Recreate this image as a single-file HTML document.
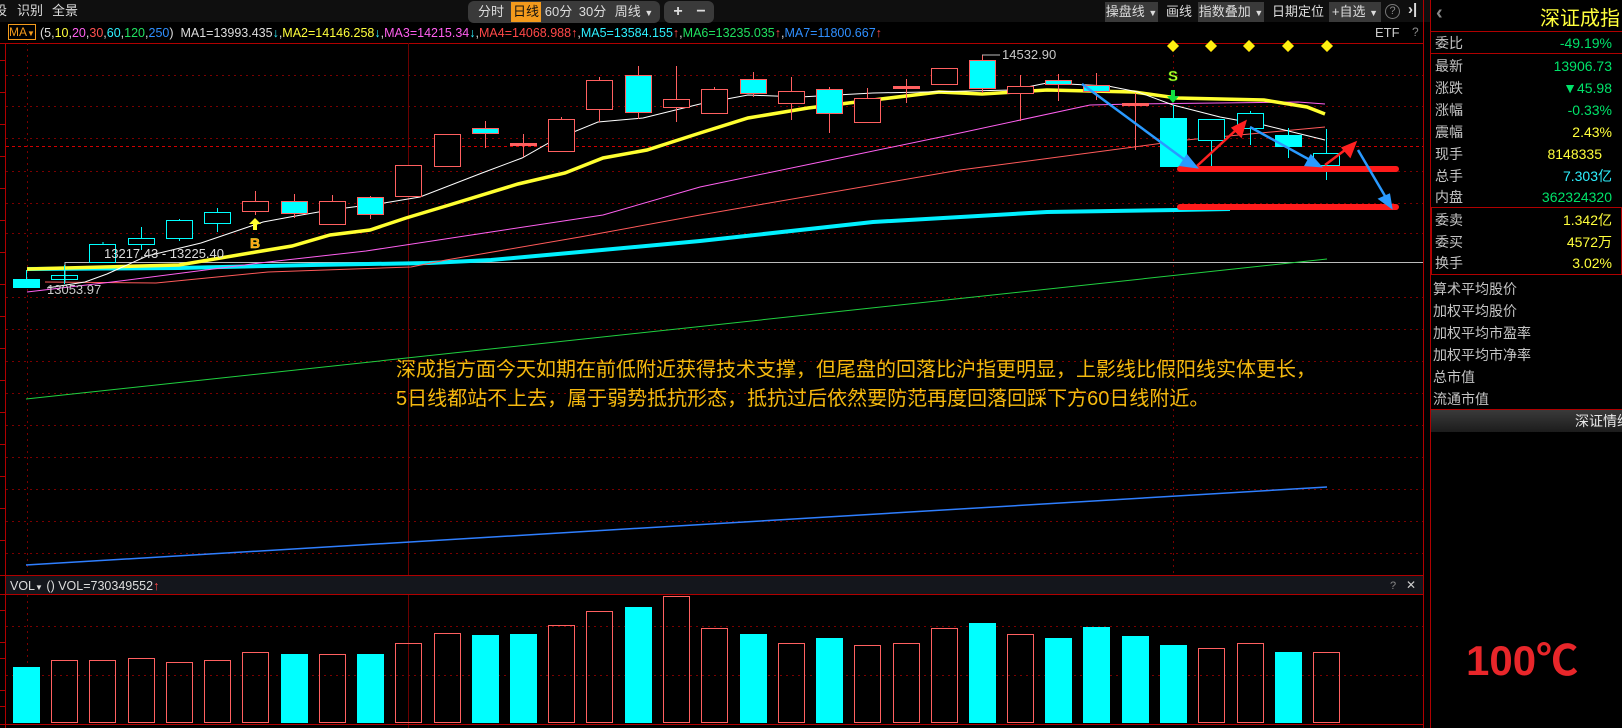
<!DOCTYPE html>
<html><head><meta charset="utf-8">
<style>
*{margin:0;padding:0;box-sizing:border-box}
body{width:1622px;height:728px;background:#000;overflow:hidden;position:relative;font-family:"Liberation Sans","Noto Sans CJK SC",sans-serif;color:#ccc}
.a{position:absolute;white-space:nowrap}
.tb{font-size:13px;color:#ddd;line-height:22px}
.btn{position:absolute;top:2px;height:20px;line-height:20px;font-size:13px;color:#ddd;text-align:center}
.rp{position:absolute;left:1431px;width:191px;font-size:14px}
.row{position:absolute;left:4px;right:10px;height:22px;line-height:22px}
.row .l{color:#c4c4c4}
.row .v{position:absolute;right:0;top:0}
.g{color:#00e36a}.y{color:#ffff3c}.c{color:#2ef0ff}
</style></head><body>
<!-- top toolbar -->
<div class="a tb" style="left:0;top:0;width:1430px;height:22px;background:#0f0f0f"></div>
<div class="a tb" style="left:-6px;top:0">设</div>
<div class="a tb" style="left:17px;top:0">识别</div>
<div class="a tb" style="left:52px;top:0">全景</div>
<div class="a" style="left:468px;top:1px;width:192px;height:22px;background:#3a3a3a;border-radius:6px"></div>
<div class="btn" style="left:471px;width:40px">分时</div>
<div class="btn" style="left:511px;width:30px;background:#f39a1c;color:#111">日线</div>
<div class="btn" style="left:541px;width:35px">60分</div>
<div class="btn" style="left:576px;width:33px">30分</div>
<div class="btn" style="left:609px;width:50px">周线 <span style="font-size:9px">▼</span></div>
<div class="a" style="left:664px;top:1px;width:50px;height:22px;background:#3a3a3a;border-radius:6px"></div>
<div class="btn" style="left:666px;width:24px;font-weight:bold;font-size:16px">+</div>
<div class="btn" style="left:690px;width:22px;font-weight:bold;font-size:16px">−</div>
<div class="btn" style="left:1105px;width:53px;background:#3a3a3a">操盘线 <span style="font-size:9px">▼</span></div>
<div class="btn" style="left:1164px;width:30px">画线</div>
<div class="btn" style="left:1198px;width:66px;background:#3a3a3a">指数叠加 <span style="font-size:9px">▼</span></div>
<div class="btn" style="left:1272px;width:52px">日期定位</div>
<div class="btn" style="left:1329px;width:52px;background:#3a3a3a">+自选 <span style="font-size:9px">▼</span></div>
<div class="a" style="left:1385px;top:4px;width:15px;height:15px;border:1px solid #777;border-radius:50%;color:#888;font-size:11px;line-height:13px;text-align:center">?</div>
<div class="a" style="left:1408px;top:1px;color:#ddd;font-size:15px;font-weight:bold">›|</div>
<!-- MA label row -->
<div class="a" style="left:8px;top:24px;width:28px;height:16px;border:1px solid #f39a1c;color:#f39a1c;font-size:12px;line-height:14px;text-align:center">MA<span style="font-size:8px">▼</span></div>
<div class="a" style="left:40px;top:25px;font-size:12.5px;line-height:16px;color:#ddd">(5,<span style="color:#ffff3c">10</span>,<span style="color:#ff5ff0">20</span>,<span style="color:#ff5050">30</span>,<span style="color:#2ef0ff">60</span>,<span style="color:#20e060">120</span>,<span style="color:#2f8fff">250</span>)&nbsp; MA1=13993.435<span style="color:#2ef0ff">↓</span>,<span style="color:#ffff3c">MA2=14146.258</span><span style="color:#2ef0ff">↓</span>,<span style="color:#ff5ff0">MA3=14215.34</span><span style="color:#2ef0ff">↓</span>,<span style="color:#ff4848">MA4=14068.988↑</span>,<span style="color:#2ef0ff">MA5=13584.155</span><span style="color:#ff4848">↑</span>,<span style="color:#20e060">MA6=13235.035</span><span style="color:#ff4848">↑</span>,<span style="color:#2f8fff">MA7=11800.667</span><span style="color:#ff4848">↑</span></div>
<div class="a" style="left:1375px;top:25px;font-size:13px;color:#ccc">ETF</div>
<div class="a" style="left:1412px;top:25px;font-size:12px;color:#888">?</div>

<svg class="a" style="left:0;top:0" width="1430" height="728">
<g stroke="#8a0000" stroke-width="1">
<line x1="0" y1="43.5" x2="1424" y2="43.5" stroke="#b00000"/>
<line x1="1423.5" y1="0" x2="1423.5" y2="728" stroke="#b00000"/>
<line x1="5.5" y1="43" x2="5.5" y2="728" stroke="#b00000"/>
<line x1="408.5" y1="43" x2="408.5" y2="728" stroke="#6a0000"/>
<line x1="0" y1="575.5" x2="1424" y2="575.5" stroke="#b00000"/>
<line x1="0" y1="594.5" x2="1424" y2="594.5" stroke="#b00000"/>
<line x1="0" y1="724.5" x2="1424" y2="724.5" stroke="#b00000"/>
</g>
<g stroke="#7a0000" stroke-dasharray="2,4" stroke-width="1">
<line x1="6" y1="75.5" x2="1423" y2="75.5"/><line x1="6" y1="106.5" x2="1423" y2="106.5"/><line x1="6" y1="138.5" x2="1423" y2="138.5"/>
<line x1="6" y1="171.5" x2="1423" y2="171.5"/><line x1="6" y1="203.5" x2="1423" y2="203.5"/><line x1="6" y1="233.5" x2="1423" y2="233.5"/>
<line x1="6" y1="297.5" x2="1423" y2="297.5"/><line x1="6" y1="329.5" x2="1423" y2="329.5"/><line x1="6" y1="361.5" x2="1423" y2="361.5"/>
<line x1="6" y1="393.5" x2="1423" y2="393.5"/><line x1="6" y1="425.5" x2="1423" y2="425.5"/><line x1="6" y1="457.5" x2="1423" y2="457.5"/>
<line x1="6" y1="489.5" x2="1423" y2="489.5"/><line x1="6" y1="521.5" x2="1423" y2="521.5"/><line x1="6" y1="553.5" x2="1423" y2="553.5"/>
<line x1="6" y1="626.5" x2="1423" y2="626.5"/><line x1="6" y1="675.5" x2="1423" y2="675.5"/>
<line x1="27.5" y1="43" x2="27.5" y2="724"/><line x1="1173.5" y1="43" x2="1173.5" y2="575"/>
</g>
<line x1="6" y1="146.5" x2="1423" y2="146.5" stroke="#d00000" stroke-dasharray="3,3"/>
<g stroke="#b00000"><line x1="0" y1="60.5" x2="5" y2="60.5"/><line x1="0" y1="92.5" x2="5" y2="92.5"/><line x1="0" y1="124.5" x2="5" y2="124.5"/><line x1="0" y1="156.5" x2="5" y2="156.5"/><line x1="0" y1="188.5" x2="5" y2="188.5"/><line x1="0" y1="220.5" x2="5" y2="220.5"/><line x1="0" y1="252.5" x2="5" y2="252.5"/><line x1="0" y1="284.5" x2="5" y2="284.5"/><line x1="0" y1="316.5" x2="5" y2="316.5"/><line x1="0" y1="348.5" x2="5" y2="348.5"/><line x1="0" y1="380.5" x2="5" y2="380.5"/><line x1="0" y1="412.5" x2="5" y2="412.5"/><line x1="0" y1="444.5" x2="5" y2="444.5"/><line x1="0" y1="476.5" x2="5" y2="476.5"/><line x1="0" y1="508.5" x2="5" y2="508.5"/><line x1="0" y1="540.5" x2="5" y2="540.5"/><line x1="0" y1="610.5" x2="5" y2="610.5"/><line x1="0" y1="642.5" x2="5" y2="642.5"/><line x1="0" y1="658.5" x2="5" y2="658.5"/><line x1="0" y1="690.5" x2="5" y2="690.5"/><line x1="0" y1="706.5" x2="5" y2="706.5"/></g>

<!-- gray line -->
<polyline points="65,283 65,262.5 1423,262.5" fill="none" stroke="#bbb" stroke-width="1"/>
<!-- MA120 / MA250 -->
<line x1="26" y1="399" x2="1327" y2="259" stroke="#20d040" stroke-width="1"/>
<line x1="26" y1="565" x2="1327" y2="487" stroke="#2f7fff" stroke-width="1.5"/>
<!-- MA60 -->
<polyline points="27,269 179,268 312,265 429,263 491,260 580,252 700,241 873,222 1047,212 1177,210 1230,209" fill="none" stroke="#00f0ff" stroke-width="4"/>
<!-- MA30 -->
<polyline points="45,282 156,283 268,272 411,267 446,260 580,237 700,215 960,170 1134,147 1186,140 1325,127" fill="none" stroke="#ff5a5a" stroke-width="1"/>
<!-- MA20 -->
<polyline points="27,292 112,282 268,262 366,251 491,232 603,215 700,187 830,160 960,133 1090,105 1134,104 1298,102 1325,104" fill="none" stroke="#ff60f0" stroke-width="1"/>
<!-- MA10 -->
<polyline points="27,269 179,265 250,253 292,246 330,235 370,230 406,218 446,206 518,184 565,173 603,158 647,150 700,133 748,118 808,108 873,100 939,92 982,94 1047,90 1134,92 1177,98 1264,100 1307,107 1325,114" fill="none" stroke="#ffff30" stroke-width="3.5"/>
<!-- MA5 -->
<polyline points="47,288 85,282 107,274 147,256 201,243 263,222 290,217 330,210 384,203 420,197 482,173 522,158 554,140 598,122 643,118 700,104 748,95 800,97 873,93 925,92 1012,90 1047,83 1108,86 1138,92 1173,105 1220,117 1264,125 1325,140" fill="none" stroke="#fff" stroke-width="1"/>

<!-- candles -->
<g stroke-width="1">
<g stroke="#00ffff" fill="none">
<line x1="26.5" y1="270" x2="26.5" y2="288"/>
<line x1="64.5" y1="265" x2="64.5" y2="284"/><rect x="51.5" y="275.5" width="26" height="4"/>
<line x1="103" y1="242" x2="103" y2="262"/><rect x="89.5" y="244.5" width="26" height="18" fill="#000"/>
<line x1="141.5" y1="227" x2="141.5" y2="250"/><rect x="128.5" y="238.5" width="26" height="6" fill="#000"/>
<line x1="179.5" y1="219" x2="179.5" y2="241"/><rect x="166.5" y="220.5" width="26" height="18" fill="#000"/>
<line x1="217.5" y1="208" x2="217.5" y2="232"/><rect x="204.5" y="212.5" width="26" height="11" fill="#000"/>
<line x1="1250.5" y1="111" x2="1250.5" y2="145"/><rect x="1237.5" y="113.5" width="26" height="15" fill="#000"/>
<line x1="1211.5" y1="119" x2="1211.5" y2="167"/><rect x="1198.5" y="119.5" width="26" height="21" fill="#000"/>
<line x1="1326.5" y1="129" x2="1326.5" y2="180"/><rect x="1313.5" y="153.5" width="26" height="12" fill="#000"/>
<line x1="1288.5" y1="128" x2="1288.5" y2="158"/>
<line x1="1173.5" y1="105" x2="1173.5" y2="167"/>
</g>
<g fill="#00ffff">
<rect x="13" y="279" width="27" height="9"/>
<rect x="1160" y="118" width="27" height="49"/>
<rect x="1275" y="135" width="27" height="12"/>
</g>
<g stroke="#ff6060" fill="none">
<line x1="255.5" y1="191" x2="255.5" y2="215"/><rect x="242.5" y="201.5" width="26" height="10" fill="#000"/>
<line x1="332.5" y1="195" x2="332.5" y2="224"/><rect x="319.5" y="201.5" width="26" height="23" fill="#000"/>
<line x1="408.5" y1="165" x2="408.5" y2="197"/><rect x="395.5" y="165.5" width="26" height="31" fill="#000"/>
<rect x="434.5" y="134.5" width="26" height="32" fill="#000"/>
<line x1="523.5" y1="134" x2="523.5" y2="157"/><rect x="510.5" y="143.5" width="26" height="2" fill="#ff6060"/>
<line x1="561.5" y1="117" x2="561.5" y2="151"/><rect x="548.5" y="119.5" width="26" height="32" fill="#000"/>
<line x1="599.5" y1="77" x2="599.5" y2="122"/><rect x="586.5" y="80.5" width="26" height="29" fill="#000"/>
<line x1="676.5" y1="66" x2="676.5" y2="122"/><rect x="663.5" y="99.5" width="26" height="8" fill="#000"/>
<line x1="714.5" y1="87" x2="714.5" y2="113"/><rect x="701.5" y="89.5" width="26" height="24" fill="#000"/>
<line x1="791.5" y1="77" x2="791.5" y2="120"/><rect x="778.5" y="91.5" width="26" height="12" fill="#000"/>
<line x1="867.5" y1="88" x2="867.5" y2="122"/><rect x="854.5" y="98.5" width="26" height="24" fill="#000"/>
<line x1="906.5" y1="79" x2="906.5" y2="103"/><rect x="893.5" y="86.5" width="26" height="2" fill="#ff6060"/>
<rect x="931.5" y="68.5" width="26" height="16" fill="#000"/>
<line x1="1020.5" y1="75" x2="1020.5" y2="121"/><rect x="1007.5" y="86.5" width="26" height="7" fill="#000"/>
<line x1="1135.5" y1="93" x2="1135.5" y2="150"/><rect x="1122.5" y="103.5" width="26" height="2" fill="#ff6060"/>
<line x1="294.5" y1="194" x2="294.5" y2="218"/><line x1="370.5" y1="196" x2="370.5" y2="219"/>
<line x1="485.5" y1="121" x2="485.5" y2="148"/><line x1="638.5" y1="66" x2="638.5" y2="119"/>
<line x1="753.5" y1="72" x2="753.5" y2="97"/><line x1="829.5" y1="87" x2="829.5" y2="133"/>
<line x1="982.5" y1="55" x2="982.5" y2="93"/><line x1="1058.5" y1="74" x2="1058.5" y2="101"/><line x1="1096.5" y1="73" x2="1096.5" y2="100"/>
<g fill="#00ffff">
<rect x="281.5" y="201.5" width="26" height="12"/><rect x="357.5" y="197.5" width="26" height="17"/>
<rect x="472.5" y="128.5" width="26" height="5"/><rect x="625.5" y="75.5" width="26" height="37"/>
<rect x="740.5" y="79.5" width="26" height="14"/><rect x="816.5" y="89.5" width="26" height="24"/>
<rect x="969.5" y="60.5" width="26" height="28"/><rect x="1045.5" y="80.5" width="26" height="4"/>
<rect x="1083.5" y="85.5" width="26" height="6"/>
</g>
</g>
</g>
<!-- labels -->
<polyline points="982,55 1000,55" stroke="#bbb" fill="none"/>
<text x="1002" y="59" fill="#c8c8c8" font-size="13" font-family="Liberation Sans">14532.90</text>
<text x="104" y="258" fill="#ddd" font-size="13" font-family="Liberation Sans">13217.43 - 13225.40</text>
<text x="47" y="294" fill="#ccc" font-size="13" font-family="Liberation Sans">13053.97</text>
<!-- B / S -->
<path d="M255,218 l-6,6 h4 v6 h4 v-6 h4 z" fill="#ffff30"/>
<text x="255" y="248" fill="#ff8c10" stroke="#ffff30" stroke-width="0.5" font-size="14" font-weight="bold" text-anchor="middle" font-family="Liberation Sans">B</text>
<text x="1173" y="81" fill="#c8ff30" stroke="#108000" stroke-width="0.5" font-size="15" font-weight="bold" text-anchor="middle" font-family="Liberation Sans">S</text>
<path d="M1171,90 h4 v6 h4 l-6,7 l-6,-7 h4 z" fill="#10e040"/>
<g fill="#ffef10" stroke="#a08000" stroke-width="0.5">
<path d="M1173,40 l6,6 l-6,6 l-6,-6z"/><path d="M1211,40 l6,6 l-6,6 l-6,-6z"/><path d="M1249,40 l6,6 l-6,6 l-6,-6z"/><path d="M1288,40 l6,6 l-6,6 l-6,-6z"/><path d="M1327,40 l6,6 l-6,6 l-6,-6z"/>
</g>
<!-- red support lines -->
<line x1="1180" y1="169" x2="1396" y2="169" stroke="#ff1a1a" stroke-width="6" stroke-linecap="round"/>
<line x1="1180" y1="207" x2="1396" y2="207" stroke="#ff1a1a" stroke-width="6" stroke-linecap="round"/>
<!-- arrows -->
<g stroke="#2a9aff" stroke-width="2.5" fill="#2a9aff">
<line x1="1082" y1="84" x2="1185" y2="160"/><path d="M1196,167 l-15,-2 l6,-9z"/>
<line x1="1250" y1="127" x2="1310" y2="160"/><path d="M1320,166 l-14,-1 l5,-9z"/>
<line x1="1358" y1="150" x2="1385" y2="196"/><path d="M1391,207 l-11,-8 l9,-4z"/>
</g>
<g stroke="#ff2020" stroke-width="2.5" fill="#ff2020">
<line x1="1197" y1="166" x2="1236" y2="130"/><path d="M1245,122 l-4,14 l-8,-8z"/>
<line x1="1325" y1="165" x2="1345" y2="150"/><path d="M1355,143 l-5,13 l-7,-8z"/>
</g>
<!-- volume header -->
<rect x="6" y="576" width="1417" height="18" fill="#14161c"/>
<text x="10" y="590" fill="#ddd" font-size="12.5" font-family="Liberation Sans">VOL<tspan font-size="8">▼</tspan>  () VOL=730349552<tspan fill="#ff4848">↑</tspan></text>
<text x="1390" y="589" fill="#888" font-size="11" font-family="Liberation Sans">?</text>
<text x="1406" y="589" fill="#ccc" font-size="12" font-family="Liberation Sans">✕</text>
<!-- volume bars -->
<g fill="#00ffff">
<rect x="13" y="667" width="27" height="56"/><rect x="281" y="654" width="27" height="69"/><rect x="357" y="654" width="27" height="69"/>
<rect x="472" y="635" width="27" height="88"/><rect x="510" y="634" width="27" height="89"/><rect x="625" y="607" width="27" height="116"/>
<rect x="740" y="634" width="27" height="89"/><rect x="816" y="638" width="27" height="85"/><rect x="969" y="623" width="27" height="100"/>
<rect x="1045" y="638" width="27" height="85"/><rect x="1083" y="627" width="27" height="96"/><rect x="1122" y="636" width="27" height="87"/>
<rect x="1160" y="645" width="27" height="78"/><rect x="1275" y="652" width="27" height="71"/>
</g>
<g fill="none" stroke="#ff6060">
<rect x="51.5" y="660.5" width="26" height="62"/><rect x="89.5" y="660.5" width="26" height="62"/><rect x="128.5" y="658.5" width="26" height="64"/>
<rect x="166.5" y="662.5" width="26" height="60"/><rect x="204.5" y="660.5" width="26" height="62"/><rect x="242.5" y="652.5" width="26" height="70"/>
<rect x="319.5" y="654.5" width="26" height="68"/><rect x="395.5" y="643.5" width="26" height="79"/><rect x="434.5" y="633.5" width="26" height="89"/>
<rect x="548.5" y="625.5" width="26" height="97"/><rect x="586.5" y="611.5" width="26" height="111"/><rect x="663.5" y="596.5" width="26" height="126"/>
<rect x="701.5" y="628.5" width="26" height="94"/><rect x="778.5" y="643.5" width="26" height="79"/><rect x="854.5" y="645.5" width="26" height="77"/>
<rect x="893.5" y="643.5" width="26" height="79"/><rect x="931.5" y="628.5" width="26" height="94"/><rect x="1007.5" y="634.5" width="26" height="88"/>
<rect x="1198.5" y="648.5" width="26" height="74"/><rect x="1237.5" y="643.5" width="26" height="79"/><rect x="1313.5" y="652.5" width="26" height="70"/>
</g>
</svg>

<!-- annotation -->
<div class="a" style="left:396px;top:356px;font-size:20px;line-height:29px;color:#f5b90f;font-family:'Liberation Sans','Noto Sans CJK SC',sans-serif">深成指方面今天如期在前低附近获得技术支撑，但尾盘的回落比沪指更明显，上影线比假阳线实体更长，<br>5日线都站不上去，属于弱势抵抗形态，抵抗过后依然要防范再度回落回踩下方60日线附近。</div>

<!-- right panel -->
<div class="a" style="left:1430px;top:0;width:1px;height:728px;background:#b00000"></div>
<div class="a" style="left:1436px;top:2px;color:#888;font-size:20px;font-weight:bold">‹</div>
<div class="a" style="left:1540px;top:2px;color:#ffff3c;font-size:20px">深证成指</div>
<div class="a" style="left:1431px;top:31px;width:191px;height:1px;background:#b00000"></div>
<div class="rp" style="top:32px;height:22px;border-bottom:1px solid #b00000"><div class="row" style="top:0"><span class="l">委比</span><span class="v g">-49.19%</span></div></div>
<div class="rp" style="top:55px">
<div class="row" style="top:0"><span class="l">最新</span><span class="v g">13906.73</span></div>
<div class="row" style="top:22px"><span class="l">涨跌</span><span class="v g">▼45.98</span></div>
<div class="row" style="top:44px"><span class="l">涨幅</span><span class="v g">-0.33%</span></div>
<div class="row" style="top:66px"><span class="l">震幅</span><span class="v y">2.43%</span></div>
<div class="row" style="top:88px"><span class="l">现手</span><span class="v y" style="right:10px">8148335</span></div>
<div class="row" style="top:110px"><span class="l">总手</span><span class="v c">7.303亿</span></div>
<div class="row" style="top:131px"><span class="l">内盘</span><span class="v g">362324320</span></div>
</div>
<div class="a" style="left:1431px;top:207px;width:191px;height:68px;border:1px solid #b00000"></div>
<div class="rp" style="top:209px">
<div class="row" style="top:0"><span class="l">委卖</span><span class="v y">1.342亿</span></div>
<div class="row" style="top:22px"><span class="l">委买</span><span class="v y">4572万</span></div>
<div class="row" style="top:43px"><span class="l">换手</span><span class="v y">3.02%</span></div>
</div>
<div class="rp" style="top:278px;left:1433px">
<div class="row" style="top:0;left:0"><span class="l">算术平均股价</span></div>
<div class="row" style="top:22px;left:0"><span class="l">加权平均股价</span></div>
<div class="row" style="top:44px;left:0"><span class="l">加权平均市盈率</span></div>
<div class="row" style="top:66px;left:0"><span class="l">加权平均市净率</span></div>
<div class="row" style="top:88px;left:0"><span class="l">总市值</span></div>
<div class="row" style="top:110px;left:0"><span class="l">流通市值</span></div>
</div>
<div class="a" style="left:1431px;top:409px;width:191px;height:1px;background:#b00000"></div>
<div class="a" style="left:1431px;top:410px;width:191px;height:22px;background:linear-gradient(#3a3a3a,#1c1c1c);color:#e8e8e8;font-size:14px;line-height:22px;padding-left:144px">深证情绪</div>
<div class="a" style="left:1466px;top:636px;color:#e8262a;font-size:42px;font-weight:bold;line-height:50px">100℃</div>
</body></html>
